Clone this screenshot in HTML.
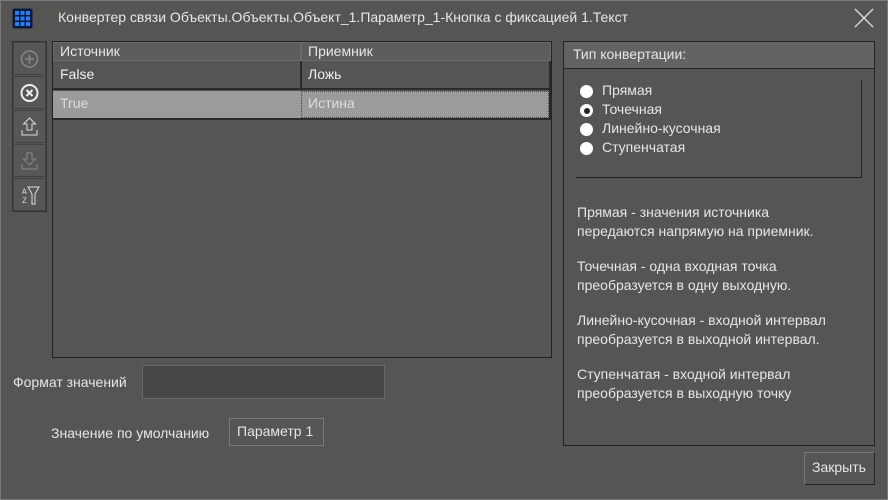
<!DOCTYPE html>
<html><head><meta charset="utf-8"><style>
*{box-sizing:border-box;margin:0;padding:0}
body{width:888px;height:500px;background:#555553;font-family:"Liberation Sans",sans-serif;font-size:14px;color:#e6e6e6;position:relative;overflow:hidden}
.a{position:absolute}
.t{white-space:nowrap}
.btn{position:absolute;left:13px;width:33px;height:33px;border:1px solid #444;background:#575755}
.p{position:absolute;left:577px;line-height:19px;white-space:nowrap}
</style></head><body>
<div class="a" style="left:0;top:0;width:888px;height:500px;border:1px solid #7a7a78"></div>
<svg class="a" style="left:12px;top:8px" width="21" height="21" viewBox="0 0 21 21"><rect x="0.5" y="0.5" width="20" height="20" rx="2" fill="#0a1a40"/>
<g fill="#2c7cf0"><rect x="3" y="3" width="4" height="4"/><rect x="8.5" y="3" width="4" height="4"/><rect x="14" y="3" width="4" height="4"/><rect x="3" y="8.5" width="4" height="4"/><rect x="8.5" y="8.5" width="4" height="4"/><rect x="14" y="8.5" width="4" height="4"/><rect x="3" y="14" width="4" height="4"/><rect x="8.5" y="14" width="4" height="4"/><rect x="14" y="14" width="4" height="4"/></g></svg>
<div class="a t" style="left:58px;top:9px;color:#e8e8e8">Конвертер связи Объекты.Объекты.Объект_1.Параметр_1-Кнопка с фиксацией 1.Текст</div>
<svg class="a" style="left:854px;top:8px" width="20" height="20"><path d="M1 1L19 19M19 1L1 19" stroke="#ddd" stroke-width="1.3"/></svg>

<div class="a" style="left:12px;top:41px;width:35px;height:171px;border:1px solid #333"></div>
<div class="btn" style="top:42px"><svg width="31" height="31"><circle cx="15.5" cy="16" r="8" fill="none" stroke="#888" stroke-width="1.5"/><path d="M11 16h9M15.5 11.5v9" stroke="#888" stroke-width="1.5"/></svg></div>
<div class="btn" style="top:76px"><svg width="31" height="31"><circle cx="15.5" cy="16" r="8" fill="none" stroke="#eee" stroke-width="2"/><path d="M12.5 13l6 6M18.5 13l-6 6" stroke="#eee" stroke-width="2"/></svg></div>
<div class="btn" style="top:110px"><svg width="31" height="31"><path d="M15.5 7l-6 6h3.5v6h5v-6h3.5z" fill="none" stroke="#ddd"/><path d="M8 19v5h15v-5" fill="none" stroke="#ddd"/></svg></div>
<div class="btn" style="top:144px"><svg width="31" height="31"><path d="M15.5 20l-6-6h3.5v-6h5v6h3.5z" fill="none" stroke="#888"/><path d="M8 19v5h15v-5" fill="none" stroke="#888"/></svg></div>
<div class="btn" style="top:178px"><svg width="31" height="31"><text x="8" y="15" font-size="8" fill="#ddd" font-family="Liberation Mono">A</text><text x="8" y="24" font-size="8" fill="#ddd" font-family="Liberation Mono">Z</text><path d="M14 8h11l-4 7v10h-3v-10z" fill="none" stroke="#ddd"/></svg></div>

<div class="a" style="left:52px;top:41px;width:500px;height:317px;border:1px solid #222;background:#555553"></div>
<div class="a" style="left:53px;top:42px;width:248px;height:19px;background:#5c5c5a;border:1px solid #6a6a68"></div>
<div class="a" style="left:301px;top:42px;width:250px;height:19px;background:#5c5c5a;border:1px solid #6a6a68"></div>
<div class="a t" style="left:60px;top:43px">Источник</div>
<div class="a t" style="left:308px;top:43px">Приемник</div>
<div class="a" style="left:53px;top:61px;width:498px;height:29px;border-bottom:2px solid #2a2a2a"></div>
<div class="a" style="left:300px;top:61px;width:2px;height:29px;background:#2a2a2a"></div>
<div class="a" style="left:549px;top:61px;width:2px;height:58px;background:#2a2a2a"></div>
<div class="a t" style="left:60px;top:66px;color:#eee">False</div>
<div class="a t" style="left:308px;top:66px;color:#eee">Ложь</div>
<div class="a" style="left:53px;top:91px;width:248px;height:27px;background:#9b9b99"></div>
<div class="a" style="left:301px;top:91px;width:248px;height:27px;background:#9b9b99;border:1px dotted #444"></div>
<div class="a" style="left:53px;top:118px;width:498px;height:2px;background:#2a2a2a"></div>
<div class="a t" style="left:60px;top:95px;color:#ddd">True</div>
<div class="a t" style="left:308px;top:95px;color:#ddd">Истина</div>

<div class="a t" style="left:13px;top:374px">Формат значений</div>
<div class="a" style="left:142px;top:365px;width:243px;height:34px;background:#474745;border:1px solid #6a6a68"></div>
<div class="a t" style="left:51px;top:425px">Значение по умолчанию</div>
<div class="a" style="left:229px;top:418px;width:95px;height:28px;border:1px solid #7a7a78"></div>
<div class="a t" style="left:237px;top:423px">Параметр 1</div>

<div class="a" style="left:563px;top:41px;width:312px;height:405px;border:1px solid #222"></div>
<div class="a" style="left:564px;top:42px;width:310px;height:27px;background:#636361;border-bottom:1px solid #222"></div>
<div class="a t" style="left:573px;top:46px;color:#e6e6e6">Тип конвертации:</div>
<div class="a" style="left:576px;top:80px;width:286px;height:98px;border-right:1px solid #222;border-bottom:1px solid #222"></div>
<div class="a" style="left:580px;top:85px;width:13px;height:13px;border-radius:50%;background:#fff"></div>
<div class="a" style="left:580px;top:104px;width:13px;height:13px;border-radius:50%;background:#fff"></div>
<div class="a" style="left:583.5px;top:107.5px;width:6px;height:6px;border-radius:50%;background:#222"></div>
<div class="a" style="left:580px;top:123px;width:13px;height:13px;border-radius:50%;background:#fff"></div>
<div class="a" style="left:580px;top:142px;width:13px;height:13px;border-radius:50%;background:#fff"></div>
<div class="a t" style="left:602px;top:81px;line-height:19px">Прямая<br>Точечная<br>Линейно-кусочная<br>Ступенчатая</div>
<div class="p" style="top:203px">Прямая - значения источника<br>передаются напрямую на приемник.</div>
<div class="p" style="top:257px">Точечная - одна входная точка<br>преобразуется в одну выходную.</div>
<div class="p" style="top:311px">Линейно-кусочная - входной интервал<br>преобразуется в выходной интервал.</div>
<div class="p" style="top:365px">Ступенчатая - входной интервал<br>преобразуется в выходную точку</div>

<div class="a" style="left:804px;top:452px;width:71px;height:33px;border:1px solid #222;border-top-color:#777;border-left-color:#777"></div>
<div class="a t" style="left:812px;top:459px">Закрыть</div>
</body></html>
